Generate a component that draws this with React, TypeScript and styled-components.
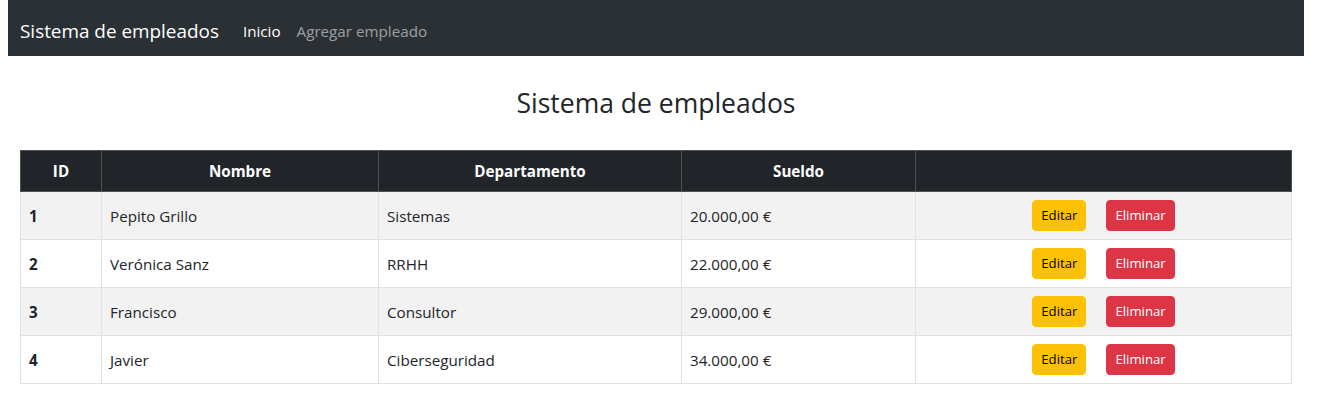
import React from "react";
import styled, { createGlobalStyle } from "styled-components";

const GlobalStyle = createGlobalStyle`
  html, body { margin: 0; padding: 0; background: #fff; }
  body {
    font-family: "Open Sans", "Noto Sans", sans-serif;
    font-size: 15.2px;
    line-height: 24px;
    color: #212529;
  }
  * { box-sizing: border-box; }
`;

const Page = styled.div`
  padding: 0 14px 0 8px;
`;

const Navbar = styled.nav`
  height: 56px;
  background: #2b3035;
  display: flex;
  align-items: center;
  padding: 11px 12px 5px;
`;

const Brand = styled.a`
  font-size: 18.9px;
  line-height: 30px;
  color: #fff;
  margin-right: 16px;
  text-decoration: none;
`;

const NavLink = styled.a<{ $active?: boolean }>`
  font-size: 15.2px;
  line-height: 24px;
  padding: 8px;
  color: ${(p) => (p.$active ? "#fff" : "rgba(255,255,255,0.55)")};
  text-decoration: none;
`;

const Container = styled.main`
  padding: 0 12px;
`;

const Title = styled.h3`
  margin: 30px 0 30px;
  font-size: 26.5px;
  font-weight: 400;
  line-height: 34px;
  text-align: center;
`;

const Table = styled.table`
  width: 100%;
  border-collapse: collapse;
  border: 1px solid #dee2e6;
`;

const HeadCell = styled.th<{ $w?: number }>`
  background: #212529;
  color: #fff;
  font-weight: 700;
  text-align: center;
  padding: 8px;
  line-height: 24px;
  border: 1px solid #4d5154;
  width: ${(p) => (p.$w ? `${p.$w}px` : "auto")};
`;

const Row = styled.tr<{ $striped?: boolean }>`
  background: ${(p) => (p.$striped ? "#f2f2f2" : "#fff")};
`;

const Cell = styled.td<{ $bold?: boolean }>`
  padding: 8px;
  height: 48px;
  line-height: 24px;
  border: 1px solid #dee2e6;
  font-weight: ${(p) => (p.$bold ? 700 : 400)};
  vertical-align: middle;
`;

const Actions = styled.div`
  display: flex;
  justify-content: center;
  gap: 20px;
`;

const Button = styled.button<{ $variant: "warning" | "danger" }>`
  font-family: inherit;
  font-size: 13.2px;
  line-height: 21px;
  padding: 4px 8px;
  border-radius: 4px;
  border: 1px solid ${(p) => (p.$variant === "warning" ? "#ffc107" : "#dc3545")};
  background: ${(p) => (p.$variant === "warning" ? "#ffc107" : "#dc3545")};
  color: ${(p) => (p.$variant === "warning" ? "#000" : "#fff")};
  cursor: pointer;
`;

const empleados = [
  { id: 1, nombre: "Pepito Grillo", departamento: "Sistemas", sueldo: "20.000,00 €" },
  { id: 2, nombre: "Verónica Sanz", departamento: "RRHH", sueldo: "22.000,00 €" },
  { id: 3, nombre: "Francisco", departamento: "Consultor", sueldo: "29.000,00 €" },
  { id: 4, nombre: "Javier", departamento: "Ciberseguridad", sueldo: "34.000,00 €" },
];

export default function App() {
  return (
    <Page>
      <GlobalStyle />
      <Navbar>
        <Brand href="#">Sistema de empleados</Brand>
        <NavLink href="#" $active>Inicio</NavLink>
        <NavLink href="#">Agregar empleado</NavLink>
      </Navbar>
      <Container>
        <Title>Sistema de empleados</Title>
        <Table>
          <thead>
            <tr>
              <HeadCell $w={81}>ID</HeadCell>
              <HeadCell $w={277}>Nombre</HeadCell>
              <HeadCell $w={303}>Departamento</HeadCell>
              <HeadCell $w={234}>Sueldo</HeadCell>
              <HeadCell></HeadCell>
            </tr>
          </thead>
          <tbody>
            {empleados.map((e, i) => (
              <Row key={e.id} $striped={i % 2 === 0}>
                <Cell $bold>{e.id}</Cell>
                <Cell>{e.nombre}</Cell>
                <Cell>{e.departamento}</Cell>
                <Cell>{e.sueldo}</Cell>
                <Cell>
                  <Actions>
                    <Button $variant="warning">Editar</Button>
                    <Button $variant="danger">Eliminar</Button>
                  </Actions>
                </Cell>
              </Row>
            ))}
          </tbody>
        </Table>
      </Container>
    </Page>
  );
}
